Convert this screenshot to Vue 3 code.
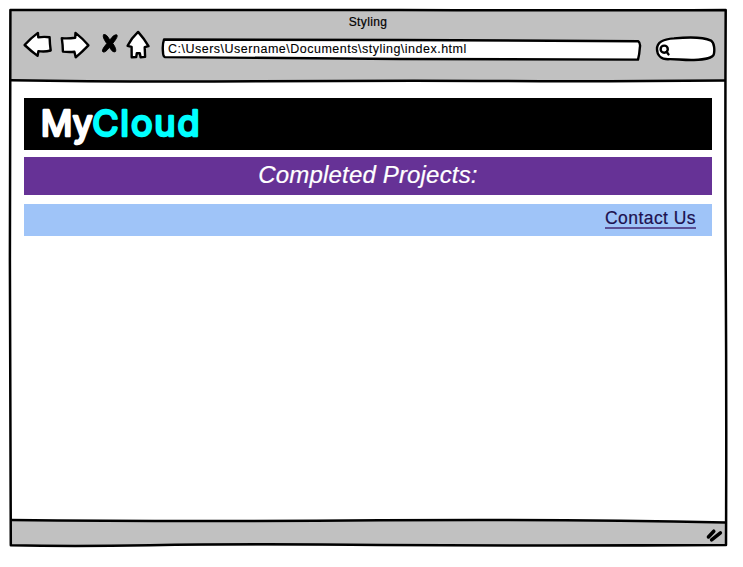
<script setup>
const title = 'Styling'
const address = 'C:\\Users\\Username\\Documents\\styling\\index.html'
</script>

<template>
  <div class="window">
    <header class="toolbar">
      <div class="title"><span>{{ title }}</span></div>
      <div class="controls">
        <svg class="nav" viewBox="22 30 132 30" width="132" height="30">
          <g class="outline">
            <path d="M24.6 45 Q31 38 37.9 32.9 L38.3 37.4 Q44 36.4 49.6 37.3 Q49.8 44 50.7 50.5 Q45 52 38.4 51.1 L37.6 55.9 Q31 51 24.6 45Z" />
            <path d="M61.8 38.2 Q68 38.8 75.2 37.8 L75.5 32.9 Q82.5 38.4 88.4 45.3 Q82.5 51.5 75.7 57.3 L74.4 51.8 Q69 52.4 62.9 51.6 Q62.8 45 61.8 38.2Z" />
            <path d="M138.1 31.9 Q144 38.5 148.5 46.2 L144.7 47.2 L145.1 56.9 L140.6 57.2 L139.8 53.2 L136.8 53.3 L136.2 57.1 L131.7 57.2 L131.6 46.8 L127.6 45.8 Q131.5 38 138.1 31.9Z" />
          </g>
          <path class="cross" d="M103.6 34.5 Q107 34 109.8 40.2 Q113.6 34.3 116.8 34.8 Q118.7 36.2 112.8 43.4 Q116.6 48.8 115.6 51.5 Q112.9 53.3 109.4 47.2 Q105.6 52.8 103 52 Q100.7 50.6 106.8 43.6 Q102 37 103.6 34.5Z" />
        </svg>
        <div class="address">
          <svg class="shape" viewBox="160 36 482 26" width="482" height="26">
            <path d="M164 39.5 Q280 39.3 400 40 T638.2 41.2 Q640.8 43 639.8 48 Q639.5 54 638 59.6 Q520 59.7 400 59 T165 57.1 Q163 56.5 163 52 Q162.2 45 164 39.5Z" />
          </svg>
          <span>{{ address }}</span>
        </div>
        <svg class="search" viewBox="654 35 62 28" width="62" height="28">
          <path d="M657 49 C657 42 664 39 674 38.4 C688 37 704 37.4 711 40.6 C714.5 43 714.7 50 713.9 54 C713 58.5 704 59.4 694 60 C684 60.4 675 58.8 668 59.2 C661 59.2 657 55 657 49Z" />
          <circle cx="664.2" cy="49.2" r="3.6" />
          <path d="M666.6 51.8 L668.5 54.4" />
        </svg>
      </div>
    </header>

    <main class="page">
      <div class="brand">
        <svg width="180" height="52" viewBox="0 0 180 52">
          <text class="my" x="0.8" y="38.4" textLength="51.6" lengthAdjust="spacingAndGlyphs">My</text>
          <text class="cloud" x="52.2" y="38.4" textLength="107.3" lengthAdjust="spacing">Cloud</text>
        </svg>
      </div>
      <h1 class="heading"><span>Completed Projects:</span></h1>
      <nav class="links"><a>Contact Us</a></nav>
    </main>

    <footer class="status">
      <svg class="grip" viewBox="704 526 20 18" width="20" height="18">
        <path d="M708.4 537 L713.8 531.2 M711.6 539.9 L720.4 532.8" />
      </svg>
    </footer>

    <svg class="frame" viewBox="0 0 743 567" width="743" height="567">
      <path class="gap" d="M11 522 V519.8 Q180 521.3 380 519.9 Q570 519 725 522.2 V516 H11Z" />
      <path d="M10.4 10 Q200 9.3 400 10 T725.7 9.9 Q725 150 725.8 280 T726 545 Q560 546 380 545 Q250 543.4 150 545.3 Q70 546.6 10.8 545.3 Q10.4 400 9.9 260 Q10.7 120 10.4 10Z" />
      <path d="M10.8 80.3 Q120 82.2 260 81.3 T500 81 T725.5 80.5" />
      <path d="M10.8 520 Q180 521.8 380 520.3 Q570 519 725.5 522.6" />
    </svg>
  </div>
</template>

<style>
body {
  background: #fff;
}
</style>

<style scoped>
.window {
  position: relative;
  box-sizing: border-box;
  width: 743px;
  height: 567px;
  padding: 10px 17px 21px 10px;
  display: flex;
  flex-direction: column;
  overflow: hidden;
  font-family: "Liberation Sans", Arial, sans-serif;
  color: #000;
}
.toolbar {
  height: 71px;
  background: #c1c1c1;
}
.title {
  height: 20px;
  padding-top: 3px;
  box-sizing: border-box;
  text-align: center;
  font-size: 12px;
  line-height: 18px;
  letter-spacing: 0.35px;
  -webkit-text-stroke: 0.2px #000;
}
.controls {
  display: flex;
  align-items: flex-start;
  padding-left: 12px;
}
svg {
  display: block;
  flex: none;
}
.outline path,
.shape path,
.search path,
.search circle {
  fill: #fff;
  stroke: #000;
  stroke-width: 2.4;
  stroke-linejoin: round;
  stroke-linecap: round;
}
.cross {
  stroke: #000;
  stroke-width: 0.9;
}
.address {
  display: grid;
  margin: 6px 12px 0 6px;
}
.address > * {
  grid-area: 1 / 1;
}
.address span {
  padding-left: 8px;
  font-size: 12.5px;
  line-height: 26px;
  letter-spacing: 0.5px;
  white-space: nowrap;
  -webkit-text-stroke: 0.1px #000;
}
.search {
  margin-top: 5px;
}
.page {
  flex: 1;
  padding: 17px 4px 0 14px;
  margin-right: 10px;
  width: 688px;
}
.brand {
  height: 52px;
  padding-left: 16px;
  background: #000;
}
.brand text {
  font-family: Inter, "Liberation Sans", sans-serif;
  font-size: 36px;
  font-weight: 400;
  stroke-width: 2.6;
  stroke-linejoin: round;
}
.my {
  fill: #fff;
  stroke: #fff;
}
.cloud {
  fill: #0ff;
  stroke: #0ff;
}
.heading {
  margin: 7px 0 9px;
  height: 38px;
  background: #663296;
  color: #fff;
  text-align: center;
  font-size: 24px;
  font-style: italic;
  font-weight: 400;
  line-height: 36px;
  letter-spacing: 0.17px;
  -webkit-text-stroke: 0.2px #fff;
}
.links {
  height: 32px;
  box-sizing: border-box;
  padding: 5px 16px 0 0;
  background: #9fc4f8;
  text-align: right;
}
.links a {
  display: inline-block;
  color: #1d114f;
  font-size: 17.5px;
  line-height: 18px;
  letter-spacing: 0.45px;
  border-bottom: 2px solid #5a4f94;
  -webkit-text-stroke: 0.2px #1d114f;
}
.status {
  height: 25px;
  display: flex;
  justify-content: flex-end;
  align-items: flex-start;
  padding: 5px 2px 0 0;
  box-sizing: border-box;
  background: #c1c1c1;
}
.grip path {
  fill: none;
  stroke: #000;
  stroke-width: 3.5;
  stroke-linecap: round;
}
.frame {
  position: absolute;
  left: 0;
  top: 0;
  pointer-events: none;
}
.frame path {
  fill: none;
  stroke: #000;
  stroke-width: 2.5;
  stroke-linejoin: round;
}
.frame .gap {
  fill: #fff;
  stroke: none;
}
</style>
